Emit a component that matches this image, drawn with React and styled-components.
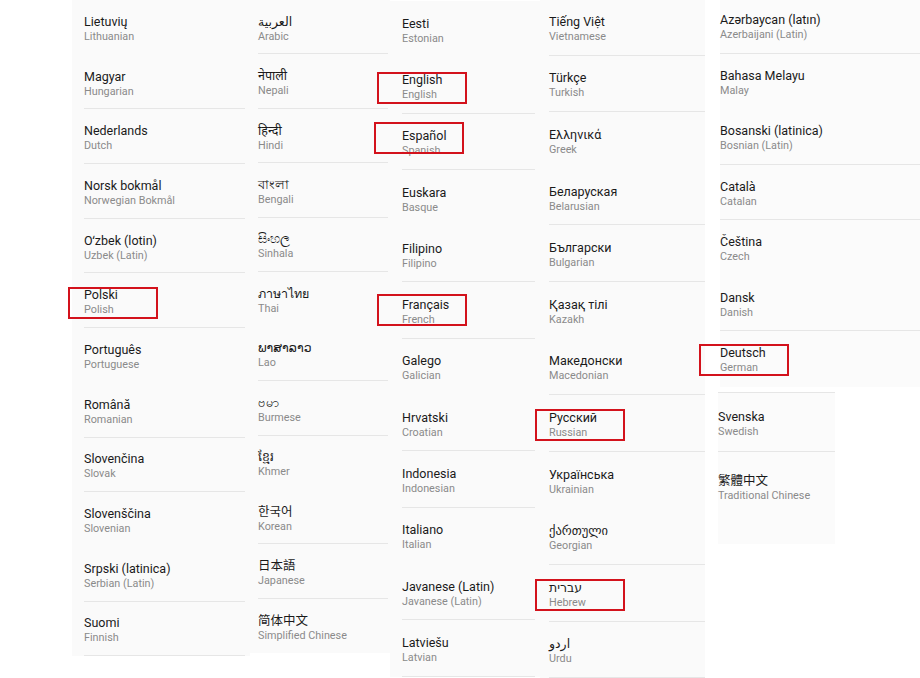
import React from "react";
import styled, { createGlobalStyle } from "styled-components";

const Global = createGlobalStyle`
  html, body { margin: 0; padding: 0; background: #ffffff; }
  body {
    width: 920px; height: 678px; overflow: hidden;
    font-family: Roboto, "Noto Sans", "DejaVu Sans", "Noto Sans CJK SC", sans-serif;
  }
`;

const Page = styled.div`
  display: flex;
  align-items: flex-start;
  padding-left: 72px;
  width: 920px;
  height: 678px;
  box-sizing: border-box;
  overflow: hidden;
`;

const Column = styled.div`
  display: flex;
  flex-direction: column;
  flex: none;
  width: ${(p) => p.$w}px;
  margin-top: ${(p) => p.$top}px;
  padding-left: ${(p) => p.$pl}px;
  padding-right: ${(p) => p.$pr}px;
  box-sizing: border-box;
  background: ${(p) => p.$bg || "#fafafa"};
`;

const Segment = styled.div`
  display: flex;
  flex-direction: column;
  width: ${(p) => p.$w}px;
  margin-left: ${(p) => p.$ml || 0}px;
  margin-top: ${(p) => p.$mt || 0}px;
  box-sizing: border-box;
  background: #fbfbfb;
  border-top: ${(p) => (p.$line ? "1px solid #e6e6e6" : "none")};
`;

const Row = styled.div`
  position: relative;
  display: flex;
  flex-direction: column;
  justify-content: ${(p) => (p.$start ? "flex-start" : "center")};
  padding-top: ${(p) => (p.$pt != null ? p.$pt : 4)}px;
  height: ${(p) => p.$h}px;
  box-sizing: border-box;
  border-bottom: 1px solid ${(p) => (p.$noLine ? "transparent" : "#e6e6e6")};
`;

const Title = styled.div`
  font-size: 12.5px;
  line-height: 16px;
  color: #1a1a1a;
  white-space: nowrap;
  font-family: ${(p) =>
    p.$tc
      ? `Roboto, "Noto Sans CJK TC", sans-serif`
      : `Roboto, "Noto Sans", "DejaVu Sans", "Noto Sans CJK SC", "Noto Sans CJK KR", sans-serif`};
`;

const Subtitle = styled.div`
  font-size: 10.8px;
  line-height: 14px;
  color: #8a8a8a;
  white-space: nowrap;
`;

const Highlight = styled.div`
  position: absolute;
  left: ${(p) => p.$bx}px;
  top: ${(p) => p.$by}px;
  width: 90px;
  height: 32px;
  box-sizing: border-box;
  border: 2px solid #d3121c;
  pointer-events: none;
`;

const cols = [
  {
    w: 178, top: 0, pl: 12, pr: 5, h: 54.7,
    items: [
      ["Lietuvių", "Lithuanian", { noLine: true }],
      ["Magyar", "Hungarian"],
      ["Nederlands", "Dutch"],
      ["Norsk bokmål", "Norwegian Bokmål"],
      ["Oʻzbek (lotin)", "Uzbek (Latin)"],
      ["Polski", "Polish", { box: [-16, 13.5] }],
      ["Português", "Portuguese", { noLine: true }],
      ["Română", "Romanian"],
      ["Slovenčina", "Slovak"],
      ["Slovenščina", "Slovenian", { noLine: true }],
      ["Srpski (latinica)", "Serbian (Latin)"],
      ["Suomi", "Finnish"],
    ],
  },
  {
    w: 140, top: 0, pl: 8, pr: 2, h: 54.45,
    items: [
      ["العربية", "Arabic"],
      ["नेपाली", "Nepali"],
      ["हिन्दी", "Hindi"],
      ["বাংলা", "Bengali"],
      ["සිංහල", "Sinhala"],
      ["ภาษาไทย", "Thai", { noLine: true }],
      ["ພາສາລາວ", "Lao"],
      ["ဗမာ", "Burmese"],
      ["ខ្មែរ", "Khmer", { noLine: true }],
      ["한국어", "Korean"],
      ["日本語", "Japanese"],
      ["简体中文", "Simplified Chinese", { noLine: true }],
    ],
  },
  {
    w: 150, top: 1, pl: 12, pr: 5, h: 56.3,
    items: [
      ["Eesti", "Estonian", { noLine: true }],
      ["English", "English", { box: [-25, 14.5] }],
      ["Español", "Spanish", { box: [-28, 8] }],
      ["Euskara", "Basque", { noLine: true }],
      ["Filipino", "Filipino"],
      ["Français", "French", { box: [-25, 12] }],
      ["Galego", "Galician", { noLine: true }],
      ["Hrvatski", "Croatian"],
      ["Indonesia", "Indonesian"],
      ["Italiano", "Italian", { noLine: true }],
      ["Javanese (Latin)", "Javanese (Latin)"],
      ["Latviešu", "Latvian"],
    ],
  },
  {
    w: 165, top: -1, pl: 9, pr: 0, h: 56.6,
    items: [
      ["Tiếng Việt", "Vietnamese"],
      ["Türkçe", "Turkish"],
      ["Ελληνικά", "Greek", { noLine: true }],
      ["Беларуская", "Belarusian"],
      ["Български", "Bulgarian"],
      ["Қазақ тілі", "Kazakh", { noLine: true }],
      ["Македонски", "Macedonian"],
      ["Русский", "Russian", { box: [-14, 14] }],
      ["Українська", "Ukrainian", { noLine: true }],
      ["ქართული", "Georgian"],
      ["עברית", "Hebrew", { box: [-14, 14] }],
      ["اردو", "Urdu"],
    ],
  },
];

const col5Upper = [
  ["Azərbaycan (latın)", "Azerbaijani (Latin)"],
  ["Bahasa Melayu", "Malay", { noLine: true }],
  ["Bosanski (latinica)", "Bosnian (Latin)"],
  ["Català", "Catalan"],
  ["Čeština", "Czech", { noLine: true }],
  ["Dansk", "Danish"],
  ["Deutsch", "German", { box: [-21, 12.5], noLine: true }],
];

function Item({ t, s, opt = {}, h, tc, start, pt }) {
  return (
    <Row $h={h} $noLine={opt.noLine} $start={start} $pt={pt}>
      <Title $tc={tc}>{t}</Title>
      <Subtitle>{s}</Subtitle>
      {opt.box && <Highlight $bx={opt.box[0]} $by={opt.box[1]} />}
    </Row>
  );
}

export default function App() {
  return (
    <>
      <Global />
      <Page>
        {cols.map((c, i) => (
          <Column key={i} $w={c.w} $top={c.top} $pl={c.pl} $pr={c.pr}>
            {c.items.map(([t, s, opt], j) => (
              <Item key={j} t={t} s={s} opt={opt} h={c.h} />
            ))}
          </Column>
        ))}
        <Column $w={215} $top={-2} $pl={15} $pr={0} $bg="transparent">
          <Segment $w={200}>
            {col5Upper.map(([t, s, opt], j) => (
              <Item key={j} t={t} s={s} opt={opt} h={55.5} />
            ))}
          </Segment>
          <Segment $w={117} $ml={-2} $mt={5} $line>
            <Item t="Svenska" s="Swedish" h={59} />
            <Item t="繁體中文" s="Traditional Chinese" h={92} tc start pt={21} opt={{ noLine: true }} />
          </Segment>
        </Column>
      </Page>
    </>
  );
}
